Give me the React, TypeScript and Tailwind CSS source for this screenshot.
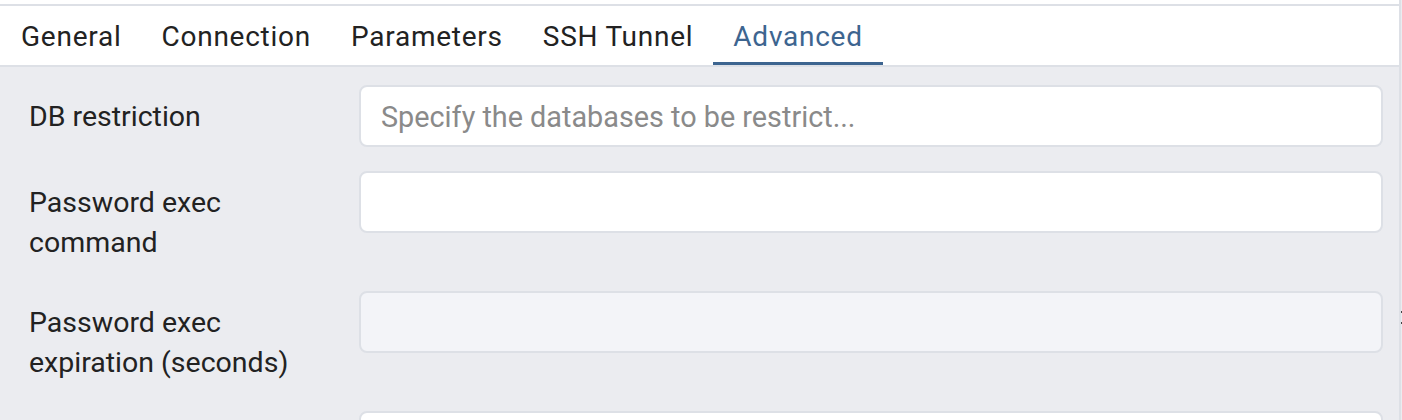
import React from 'react';

const tabs = ['General', 'Connection', 'Parameters', 'SSH Tunnel', 'Advanced'];

function Field({ label, placeholder, disabled }: { label: string; placeholder?: string; disabled?: boolean }) {
  return (
    <div className="flex shrink-0 items-start">
      <label className="w-[359px] shrink-0 pl-[29px] pr-[40px] pt-[12px] pb-[4px] text-[28.5px] leading-[40px] text-[#222222]">
        {label}
      </label>
      <input
        type="text"
        disabled={disabled}
        placeholder={placeholder}
        className={
          'h-[62px] flex-1 rounded-[8px] border-2 border-[#dde0e6] px-[20px] pt-[2px] text-[28.8px] text-[#222222] placeholder:text-[#8a8a8a] focus:outline-none ' +
          (disabled ? 'bg-[#f3f4f8]' : 'bg-white')
        }
      />
    </div>
  );
}

export default function App() {
  const active = 'Advanced';

  return (
    <div className="h-[420px] w-[1402px] overflow-hidden bg-white font-['Roboto',sans-serif]">
      <div className="flex h-full">
        <div className="flex w-[1399px] flex-col">
          <div className="mt-[4px] h-[2px] shrink-0 bg-[#dde0e6]" />
          <div className="flex h-[61px] shrink-0 border-b-2 border-[#dde0e6] bg-white pl-[1px]">
            {tabs.map((t) => (
              <div
                key={t}
                className={
                  'flex items-center border-b-[3px] px-[20px] pt-[5px] text-[28px] tracking-[0.75px] ' +
                  (t === active ? 'border-[#3d6590] text-[#3d6590]' : 'border-transparent text-[#222222]')
                }
              >
                {t}
              </div>
            ))}
          </div>
          <div className="flex flex-1 flex-col gap-6 bg-[#ebecf0] pt-[18px] pr-[16px]">
            <Field label="DB restriction" placeholder="Specify the databases to be restrict..." />
            <Field label="Password exec command" />
            <Field label="Password exec expiration (seconds)" disabled />
            <Field label="" />
          </div>
        </div>
        <div className="flex w-[3px] flex-col border-l-2 border-[#dde0e6] bg-[#ebecf0]">
          <div className="mt-[311px] h-[2px] w-[1px] bg-[#444444]" />
          <div className="mt-[9px] h-[2px] w-[1px] bg-[#444444]" />
        </div>
      </div>
    </div>
  );
}
